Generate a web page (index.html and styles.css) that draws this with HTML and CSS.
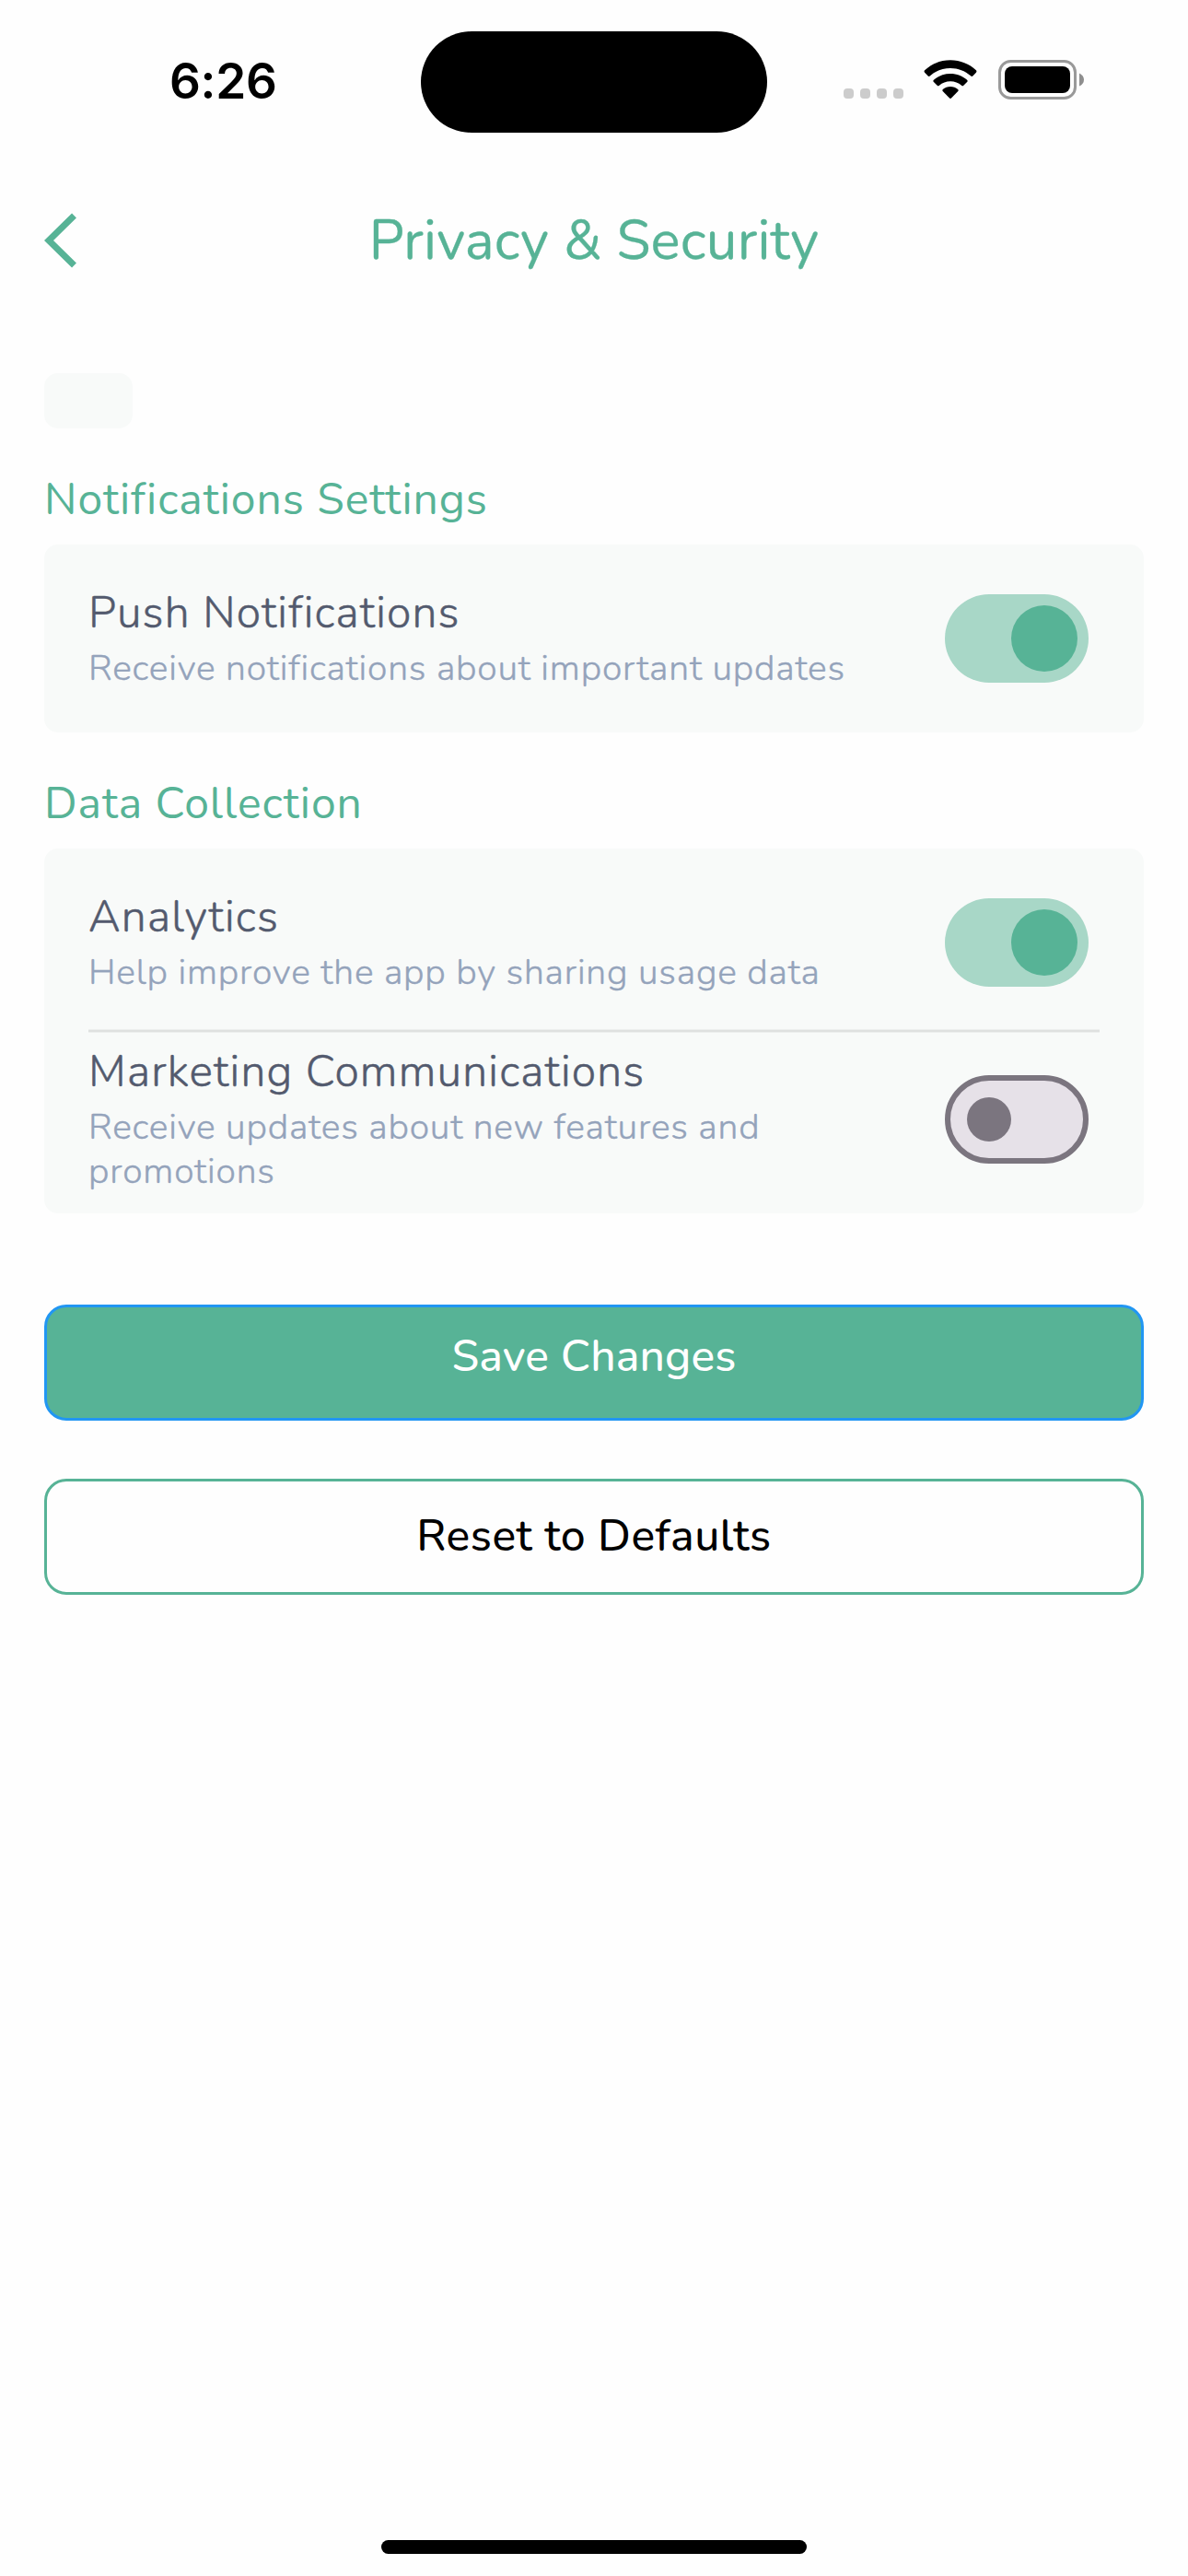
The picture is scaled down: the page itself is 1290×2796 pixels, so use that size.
FILE: index.html
```html
<!DOCTYPE html>
<html lang="en">
<head>
<meta charset="utf-8">
<title>Privacy &amp; Security</title>
<link rel="stylesheet" href="styles.css">
</head>
<body>
<div class="screen">
  <div class="status">
    <div class="time">6:26</div>
    <div class="island"></div>
    <div class="indicators">
      <div class="dots"><i></i><i></i><i></i><i></i></div>
      <svg class="wifi" width="58" height="43" viewBox="0 0 58 43">
        <path d="M29 0.3C39.8 0.3 49.5 4.400 56.900 11.300Q58 12.500 56.900 13.700L53.300 17.400Q52.200 18.400 51 17.300C45 11.900 37.300 8.900 29 8.900S13 11.900 7 17.300Q5.800 18.400 4.700 17.400L1.100 13.700Q0 12.500 1.100 11.300C8.500 4.400 18.200 0.300 29 0.300Z"/>
        <path d="M29 14.900C36 14.900 42.300 17.500 47.100 21.800Q48.200 22.900 47.100 24L43.300 27.800Q42.300 28.800 41.100 27.800C37.800 25 33.600 23.300 29 23.300S20.200 25 16.900 27.800Q15.700 28.800 14.700 27.800L10.900 24Q9.800 22.900 10.900 21.800C15.700 17.500 22 14.900 29 14.900Z"/>
        <path d="M29 29C32.100 29 35 30.100 37.200 32Q38.300 33 37.300 34.100L30.200 41.300Q29 42.500 27.800 41.300L20.700 34.100Q19.700 33 20.800 32C23 30.100 25.900 29 29 29Z"/>
      </svg>
      <svg class="battery" width="94" height="43" viewBox="0 0 94 43">
        <rect x="1.500" y="1.500" width="82" height="40" rx="12" fill="none" stroke="#999" stroke-width="3"/>
        <rect x="7" y="7" width="71" height="29" rx="8" fill="#000"/>
        <path d="M88 14.500Q93 17 93 21.500T88 28.500Z" fill="#8e8e8e"/>
      </svg>
    </div>
  </div>

  <header class="header">
    <svg class="back" width="36" height="60" viewBox="0 0 36 60">
      <path d="M32.500 3L5 30L32.500 57" fill="none" stroke="#57b396" stroke-width="7"/>
    </svg>
    <h1 class="title">Privacy &amp; Security</h1>
  </header>

  <main class="content">
    <div class="chip"></div>

    <h2 class="section-title">Notifications Settings</h2>
    <section class="card">
      <div class="row">
        <div class="text">
          <div class="name">Push Notifications</div>
          <div class="desc">Receive notifications about important updates</div>
        </div>
        <div class="switch on"><span class="thumb"></span></div>
      </div>
    </section>

    <h2 class="section-title">Data Collection</h2>
    <section class="card">
      <div class="row">
        <div class="text">
          <div class="name">Analytics</div>
          <div class="desc">Help improve the app by sharing usage data</div>
        </div>
        <div class="switch on"><span class="thumb"></span></div>
      </div>
      <div class="divider"></div>
      <div class="row last">
        <div class="text">
          <div class="name">Marketing Communications</div>
          <div class="desc">Receive updates about new features and promotions</div>
        </div>
        <div class="switch off"><span class="thumb"></span></div>
      </div>
    </section>

    <div class="actions">
      <button class="button primary">Save Changes</button>
      <button class="button outline">Reset to Defaults</button>
    </div>
  </main>

  <div class="home-bar"></div>
</div>
</body>
</html>
```
FILE: styles.css
```css
* { box-sizing: border-box; }

body {
  margin: 0;
  background: #fefefe;
  font-family: "Nunito", "Lato", sans-serif;
}

.screen {
  width: 1290px;
  height: 2796px;
  display: flex;
  flex-direction: column;
  overflow: hidden;
}

/* Status bar */
.status {
  height: 177px;
  display: grid;
  grid-template-columns: 457px 376px 1fr;
  align-items: start;
}

.time {
  padding: 56px 0 0 184px;
  font: 600 53px/64px "Inter", sans-serif;
  letter-spacing: -0.3px;
  color: #000;
}

.island {
  margin-top: 34px;
  height: 110px;
  border-radius: 55px;
  background: #000;
}

.indicators {
  display: flex;
  align-items: flex-start;
  padding: 65px 0 0 83px;
}

.dots {
  display: flex;
  gap: 7px;
  margin: 31px 22px 0 0;
}

.dots i {
  width: 11px;
  height: 11px;
  border-radius: 4px;
  background: #ccc;
}

.wifi { margin-right: 23px; }

/* Header */
.header {
  height: 168px;
  padding: 0 48px;
  display: grid;
  grid-template-columns: 36px 1fr 36px;
  align-items: center;
}

.title {
  margin: 0;
  text-align: center;
  font-size: 60px;
  line-height: 82px;
  font-weight: 400;
  letter-spacing: 0.25px;
  -webkit-text-stroke: 0.3px currentColor;
  color: #57b396;
}

/* Content */
.content {
  padding: 60px 48px 0;
  display: flex;
  flex-direction: column;
}

.chip {
  width: 96px;
  height: 60px;
  border-radius: 15px;
  background: #f8faf9;
}

.section-title {
  margin: 46px 0 17px;
  font-size: 48px;
  line-height: 63px;
  font-weight: 400;
  letter-spacing: 0.98px;
  color: #57b396;
}

.card {
  padding: 0 48px;
  border-radius: 15px;
  background: #f8faf9;
}

.row {
  height: 204px;
  padding: 41px 12px 0 0;
  display: flex;
  justify-content: space-between;
  align-items: flex-start;
}

.row:not(:last-child) { height: 196px; }

.row.last {
  height: 196px;
  padding-top: 9px;
}

.text { width: 870px; }

.name {
  font-size: 48px;
  line-height: 66px;
  font-weight: 300;
  letter-spacing: 1.2px;
  -webkit-text-stroke: 0.5px currentColor;
  color: #535a6e;
}

.desc {
  margin-top: 4px;
  font-size: 39px;
  line-height: 48px;
  font-weight: 300;
  letter-spacing: 0.81px;
  -webkit-text-stroke: 0.4px currentColor;
  color: #94a3bb;
}

.divider {
  height: 4px;
  background: #dfe1e0;
  border-top: 1px solid #edefee;
  border-bottom: 1px solid #edefee;
}

.switch {
  width: 156px;
  height: 96px;
  margin-top: 13px;
  border-radius: 48px;
  display: flex;
  align-items: center;
}

.switch.on {
  justify-content: flex-end;
  padding-right: 12px;
  background: #a8d7c7;
}

.switch.off {
  margin-top: 37px;
  padding-left: 18px;
  border: 6px solid #7b757f;
  background: #e6e1e8;
}

.thumb {
  width: 72px;
  height: 72px;
  border-radius: 50%;
  background: #57b396;
}

.switch.off .thumb {
  width: 48px;
  height: 48px;
  background: #7b757f;
}

/* Buttons */
.actions {
  margin-top: 99px;
  display: flex;
  flex-direction: column;
  gap: 63px;
}

.button {
  height: 126px;
  border: 3px solid #57b396;
  border-radius: 24px;
  font-family: inherit;
  font-size: 48px;
  line-height: 66px;
  font-weight: 500;
}

.primary {
  padding: 0 0 14px;
  border-color: #2196f3;
  background: #57b396;
  color: #fff;
  letter-spacing: 0.1px;
}

.outline {
  padding: 0 0 2px;
  background: transparent;
  color: #000;
  letter-spacing: 0.5px;
}

.home-bar {
  width: 462px;
  height: 15px;
  margin: auto auto 24px;
  border-radius: 8px;
  background: #000;
}
```
